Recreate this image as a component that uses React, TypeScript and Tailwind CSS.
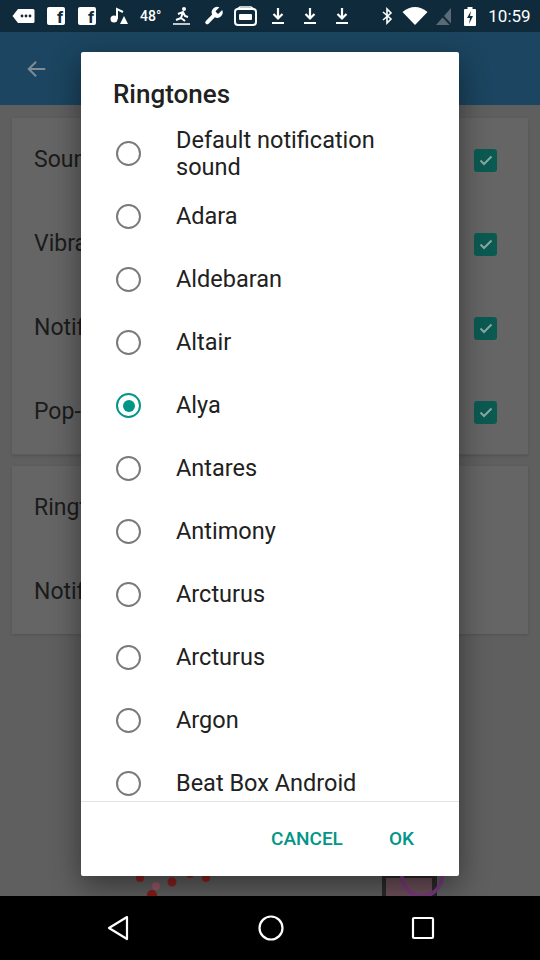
import React from 'react';

const tones = [
  'Default notification sound',
  'Adara',
  'Aldebaran',
  'Altair',
  'Alya',
  'Antares',
  'Antimony',
  'Arcturus',
  'Arcturus',
  'Argon',
  'Beat Box Android',
];

function Radio({ on }: { on: boolean }) {
  return (
    <div
      className={
        on
          ? 'w-[25px] h-[25px] shrink-0 rounded-full border-[2.5px] border-[#009688] flex items-center justify-center'
          : 'w-[25px] h-[25px] shrink-0 rounded-full border-[2.5px] border-[#7a7a7a]'
      }
    >
      {on && <div className="w-[12px] h-[12px] rounded-full bg-[#009688]" />}
    </div>
  );
}

function Check() {
  return (
    <div className="w-[23px] h-[23px] rounded-[3px] bg-[#0b5a52] flex items-center justify-center">
      <svg width="16" height="16" viewBox="0 0 16 16">
        <path d="M2.5 8.5l3.5 3.5 7.5-7.5" stroke="#8aa8a3" strokeWidth="2" fill="none" />
      </svg>
    </div>
  );
}

function StatusBar() {
  return (
    <div className="h-[32px] bg-[#0f2a3b] flex items-center text-white">
      {/* message bubble */}
      <svg className="ml-[12px]" width="23" height="16" viewBox="0 0 23 16">
        <path d="M6 1h15a1.5 1.5 0 0 1 1.5 1.5v11a1.5 1.5 0 0 1-1.5 1.5H6L0.5 8z" fill="#fff" />
        <circle cx="10" cy="8" r="1.4" fill="#0f2a3b" />
        <circle cx="14" cy="8" r="1.4" fill="#0f2a3b" />
        <circle cx="18" cy="8" r="1.4" fill="#0f2a3b" />
      </svg>
      <div className="ml-[12px] w-[18px] h-[18px] bg-white rounded-[2px] flex items-end justify-end pr-[2px] text-[#0f2a3b] text-[17px] font-bold leading-[16px]">f</div>
      <div className="ml-[13px] w-[18px] h-[18px] bg-white rounded-[2px] flex items-end justify-end pr-[2px] text-[#0f2a3b] text-[17px] font-bold leading-[16px]">f</div>
      <svg className="ml-[13px]" width="20" height="20" viewBox="0 0 20 20">
        <circle cx="5" cy="13" r="3.5" fill="#fff" />
        <path d="M8 13V3l6 3" stroke="#fff" strokeWidth="2" fill="none" />
        <path d="M11 18l4-8 4 8z" fill="#fff" />
      </svg>
      <span className="ml-[11px] text-[14px] font-medium">48°</span>
      <svg className="ml-[11px]" width="19" height="20" viewBox="0 0 19 20">
        <circle cx="12" cy="3" r="2" fill="#fff" />
        <path d="M6 8l5-2 2 4 3 1M11 6l-2 6 4 3M9 12l-5 2" stroke="#fff" strokeWidth="2" fill="none" />
        <path d="M1 18h17" stroke="#fff" strokeWidth="1.5" />
      </svg>
      <svg className="ml-[11px]" width="23" height="22" viewBox="0 0 24 24">
        <path d="M14.7 6.3a1 1 0 0 0 0 1.4l1.6 1.6a1 1 0 0 0 1.4 0l3.77-3.77a6 6 0 0 1-7.94 7.94l-6.91 6.91a2.12 2.12 0 0 1-3-3l6.91-6.91a6 6 0 0 1 7.94-7.940l-3.76 3.76z" fill="#fff" />
      </svg>
      <svg className="ml-[9px]" width="23" height="20" viewBox="0 0 23 20">
        <rect x="1" y="3" width="21" height="16" rx="3" fill="none" stroke="#fff" strokeWidth="2" />
        <rect x="5" y="8" width="13" height="6" rx="1" fill="#fff" />
        <path d="M3 3l3-2h11l3 2" stroke="#fff" strokeWidth="1.5" fill="none" />
      </svg>
      {[0, 1, 2].map((i) => (
        <svg key={i} className={i === 0 ? 'ml-[14px]' : 'ml-[18px]'} width="14" height="18" viewBox="0 0 14 18">
          <path d="M7 1v10M2.5 7l4.5 4.5L11.5 7" stroke="#fff" strokeWidth="2.2" fill="none" />
          <path d="M1 16h12" stroke="#fff" strokeWidth="2" />
        </svg>
      ))}
      <svg className="ml-[33px]" width="11" height="18" viewBox="0 0 11 18">
        <path d="M1 5l8 7-4 4V2l4 4-8 7" stroke="#fff" strokeWidth="1.6" fill="none" />
      </svg>
      <svg className="ml-[9px]" width="26" height="18" viewBox="0 0 26 18">
        <path d="M0.5 5Q13-5 25.5 5L13 18z" fill="#fff" />
      </svg>
      <svg className="ml-[7px]" width="17" height="18" viewBox="0 0 17 18">
        <path d="M16 1v17H1z" fill="#5a6b77" />
        <path d="M1 2l15 16" stroke="#0f2a3b" strokeWidth="2" />
      </svg>
      <svg className="ml-[12px]" width="12" height="19" viewBox="0 0 12 19">
        <rect x="3.5" y="0" width="5" height="2" fill="#fff" />
        <rect x="0" y="2" width="12" height="17" rx="1" fill="#fff" />
        <path d="M7 4L3 11h3l-1 6 4-8H6z" fill="#0f2a3b" />
      </svg>
      <span className="ml-[12px] text-[17px] leading-none">10:59</span>
    </div>
  );
}

function Row({ label, check }: { label: string; check?: boolean }) {
  return (
    <div className="h-[84px] flex items-center justify-between pl-[22px] pr-[31px]">
      {/* only the part left of the dialog is ever visible */}
      <span className="w-[47px] overflow-hidden whitespace-nowrap text-[23px] text-[#1b1b1b]">{label}</span>
      {check && <Check />}
    </div>
  );
}

export default function App() {
  return (
    <div className="relative w-[540px] h-[960px] overflow-hidden font-['Roboto','Noto_Sans',sans-serif] bg-[#5f5f5f]">
      <StatusBar />
      <div className="h-[73px] bg-[#1b4560] flex items-center pl-[26px]">
        <svg width="22" height="22" viewBox="0 0 24 24">
          <path d="M21 12H4M11 4l-8 8 8 8" stroke="#7d8b95" strokeWidth="2.2" fill="none" />
        </svg>
      </div>
      <div className="h-[791px] flex flex-col px-[12px] pt-[13px]">
        <div className="bg-[#656565] border-b border-[#5a5a5a] shadow-sm">
          <Row label="Sound" check />
          <Row label="Vibrate" check />
          <Row label="Notification light" check />
          <Row label="Pop-up notification" check />
        </div>
        <div className="mt-[11px] bg-[#656565] shadow-sm">
          <Row label="Ringtone" />
          <Row label="Notification sound" />
        </div>
        <div className="mt-auto h-[40px] relative">
          <svg width="516" height="40" viewBox="0 0 516 40">
            <circle cx="128" cy="22" r="4" fill="#8a1f1f" />
            <circle cx="144" cy="30" r="4" fill="#9b5866" />
            <circle cx="160" cy="26" r="4.5" fill="#8c2020" />
            <circle cx="140" cy="39" r="5" fill="#8c1a1a" />
            <circle cx="178" cy="18" r="4" fill="#8c2020" />
            <circle cx="194" cy="22" r="4" fill="#8c2020" />
            <rect x="370" y="18" width="55" height="22" fill="#2a2a2a" />
            <rect x="374" y="22" width="46" height="18" fill="#6d4f5a" />
            <circle cx="410" cy="20" r="20" fill="none" stroke="#7a3a7f" strokeWidth="4" />
          </svg>
        </div>
      </div>
      <div className="h-[64px] bg-black flex items-center">
        <svg className="ml-[106px]" width="24" height="26" viewBox="0 0 24 26">
          <path d="M21 2L3 13l18 11z" fill="none" stroke="#fff" strokeWidth="2.2" strokeLinejoin="round" />
        </svg>
        <svg className="ml-[128px]" width="26" height="26" viewBox="0 0 26 26">
          <circle cx="13" cy="13" r="11.5" fill="none" stroke="#fff" strokeWidth="2.2" />
        </svg>
        <svg className="ml-[127px]" width="24" height="24" viewBox="0 0 24 24">
          <rect x="2" y="2" width="20" height="20" rx="1" fill="none" stroke="#fff" strokeWidth="2.2" />
        </svg>
      </div>

      {/* dialog */}
      <div className="absolute left-[81px] top-[52px] w-[378px] h-[824px] bg-white rounded-[2px] shadow-[0_10px_30px_rgba(0,0,0,0.45)] flex flex-col">
        <div className="h-[70px] pt-[26px] pl-[32px]">
          <h1 className="text-[26px] leading-[32px] font-medium text-[#212121]">Ringtones</h1>
        </div>
        <div className="h-[679px] overflow-hidden">
          {tones.map((t, i) => (
            <div key={i} className="min-h-[63px] flex items-center pl-[35px] pr-6 gap-[35px]">
              <Radio on={t === 'Alya'} />
              <span className="text-[23.5px] leading-[27px] text-[#212121]">{t}</span>
            </div>
          ))}
        </div>
        <div className="flex-1 border-t border-[#e3e3e3] flex items-center justify-end pr-[45px] gap-[46px]">
          <span className="text-[19px] font-medium text-[#009688]">CANCEL</span>
          <span className="text-[19px] font-medium text-[#009688]">OK</span>
        </div>
      </div>
    </div>
  );
}
